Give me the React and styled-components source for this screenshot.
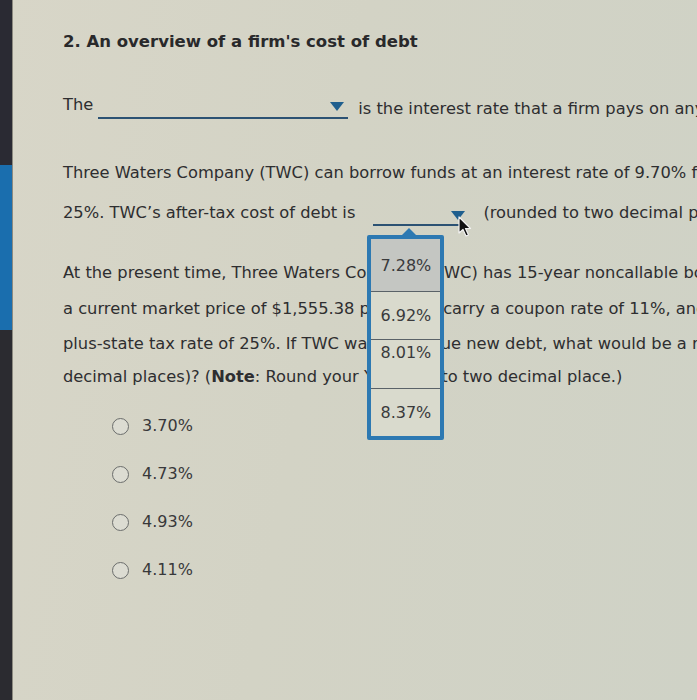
import styled, { createGlobalStyle } from "styled-components";

const GlobalStyle = createGlobalStyle`
  html, body {
    margin: 0;
    padding: 0;
    background: #d4d3c4;
  }
  * { box-sizing: border-box; }
`;

const Screen = styled.div`
  width: 697px;
  height: 700px;
  display: flex;
  overflow: hidden;
  background: linear-gradient(100deg, #d8d6c8 0%, #d3d3c5 45%, #cfd2c6 100%);
  font-family: "DejaVu Sans", Verdana, sans-serif;
  color: #2e2e30;
`;

const SideBar = styled.div`
  width: 13px;
  flex: none;
  display: flex;
  flex-direction: column;
  background: #2a2a33;
  border-right: 1px solid #8c8a80;
`;

const SideSegment = styled.div`
  height: ${(p) => p.$h}px;
  flex: ${(p) => (p.$h ? "none" : "1")};
  background: ${(p) => p.$color};
`;

const Content = styled.div`
  flex: 1;
  padding: 32px 0 0 50px;
  overflow: hidden;
  position: relative;
`;

const Title = styled.h2`
  margin: 0;
  font-size: 16.5px;
  font-weight: bold;
  line-height: 20px;
  color: #29292b;
`;

const Line = styled.div`
  white-space: nowrap;
  font-size: 16.3px;
  line-height: ${(p) => p.$lh || 36}px;
  display: flex;
  align-items: center;

  & > * { flex: none; }
`;

const Para = styled.div`
  margin-top: ${(p) => p.$mt}px;
`;

const Raised = styled.span`
  position: relative;
  top: -4px;
`;

const Blank = styled.span`
  position: relative;
  display: inline-flex;
  align-items: flex-end;
  justify-content: flex-end;
  width: ${(p) => p.$w}px;
  height: 22px;
  margin: 0 ${(p) => p.$mr}px 0 ${(p) => p.$ml}px;
  border-bottom: 2px solid #2c5273;
  top: ${(p) => p.$dy}px;
`;

const Arrow = styled.span`
  width: 0;
  height: 0;
  border-left: 7px solid transparent;
  border-right: 7px solid transparent;
  border-top: 9px solid #1f5f8e;
  margin: 0 ${(p) => p.$mr ?? 4}px ${(p) => p.$mb ?? 6}px 0;
`;

const Cursor = styled.svg`
  position: absolute;
  right: -9px;
  bottom: -14px;
  z-index: 3;
`;

const List = styled.div`
  position: absolute;
  top: calc(100% + 11px);
  left: -6px;
  width: 77px;
  border: 4px solid #2d79b2;
  border-radius: 2px;
  background: #d9dacd;
  z-index: 2;
  display: flex;
  flex-direction: column;

  &::before {
    content: "";
    position: absolute;
    top: -11px;
    left: 31px;
    border-left: 7px solid transparent;
    border-right: 7px solid transparent;
    border-bottom: 7px solid #2d79b2;
  }
`;

const Item = styled.div`
  height: ${(p) => p.$h}px;
  display: flex;
  align-items: ${(p) => (p.$top ? "flex-start" : "center")};
  padding-top: ${(p) => (p.$top ? 3 : 0)}px;
  justify-content: center;
  font-size: 16px;
  line-height: 19px;
  color: #3a3a3c;
  background: ${(p) => (p.$active ? "#c4c6c2" : "transparent")};
  border-top: ${(p) => (p.$first ? "none" : "1px solid #5a6268")};
`;

const Options = styled.div`
  margin-top: 22px;
  padding-left: 49px;
  display: flex;
  flex-direction: column;
  gap: 26px;
`;

const Option = styled.label`
  display: flex;
  align-items: center;
  gap: 13px;
  font-size: 16px;
  line-height: 22px;
  color: #38383a;
`;

const Radio = styled.span`
  width: 17px;
  height: 17px;
  border-radius: 50%;
  border: 1.5px solid #6b6d6c;
  background: #dcdcd2;
`;

const choices = [
  { v: "7.28%", h: 52, active: true },
  { v: "6.92%", h: 48 },
  { v: "8.01%", h: 49, top: true },
  { v: "8.37%", h: 48 },
];

export default function App() {
  return (
    <>
      <GlobalStyle />
      <Screen>
        <SideBar>
          <SideSegment $h={165} $color="#2a2a33" />
          <SideSegment $h={165} $color="#1a6eae" />
          <SideSegment $color="#2b2b30" />
        </SideBar>
        <Content>
          <Title>2. An overview of a firm's cost of debt</Title>

          <Para $mt={42}>
            <Line $lh={30}>
              <Raised>The</Raised>
              <Blank $w={250} $ml={5} $mr={10} $dy={-1}>
                <Arrow />
              </Blank>
              <span>is the interest rate that a firm pays on any new debt issued.</span>
            </Line>
          </Para>

          <Para $mt={29}>
            <Line $lh={40}>
              Three Waters Company (TWC) can borrow funds at an interest rate of 9.70%
              for a period of five years. Its marginal federal-plus-state tax rate is
            </Line>
            <Line $lh={40}>
              <span>25%. TWC’s after-tax cost of debt is</span>
              <Blank $w={92} $ml={18} $mr={18} $dy={2}>
                <Arrow $mr={0} $mb={4} />
                <Cursor width="16" height="22" viewBox="0 0 16 22">
                  <path
                    d="M1 1 L1 17 L5 13.5 L8 20 L10.5 19 L7.5 12.5 L12.5 12.5 Z"
                    fill="#111"
                    stroke="#f2f2f2"
                    strokeWidth="1.2"
                    strokeLinejoin="round"
                  />
                </Cursor>
                <List>
                  {choices.map((c, i) => (
                    <Item key={c.v} $h={c.h} $active={c.active} $top={c.top} $first={i === 0}>
                      {c.v}
                    </Item>
                  ))}
                </List>
              </Blank>
              <span>(rounded to two decimal places).</span>
            </Line>
          </Para>

          <Para $mt={22}>
            <Line>
              At the present time, Three Waters Company (TWC) has 15-year noncallable bonds with a
              face value of $1,000 that are outstanding. These bonds have
            </Line>
            <Line>
              a current market price of $1,555.38 per bond, carry a coupon rate of 11%, and
              distribute annual coupon payments. The company incurs a federal-
            </Line>
            <Line $lh={33}>
              plus-state tax rate of 25%. If TWC wants to issue new debt, what would be a
              reasonable estimate for its after-tax cost of debt (rounded to two
            </Line>
            <Line $lh={33}>
              <span>decimal places)? (</span>
              <b>Note</b>
              <span>: Round your YTM rate to two decimal place.)</span>
            </Line>
          </Para>

          <Options>
            {["3.70%", "4.73%", "4.93%", "4.11%"].map((o) => (
              <Option key={o}>
                <Radio />
                {o}
              </Option>
            ))}
          </Options>
        </Content>
      </Screen>
    </>
  );
}
